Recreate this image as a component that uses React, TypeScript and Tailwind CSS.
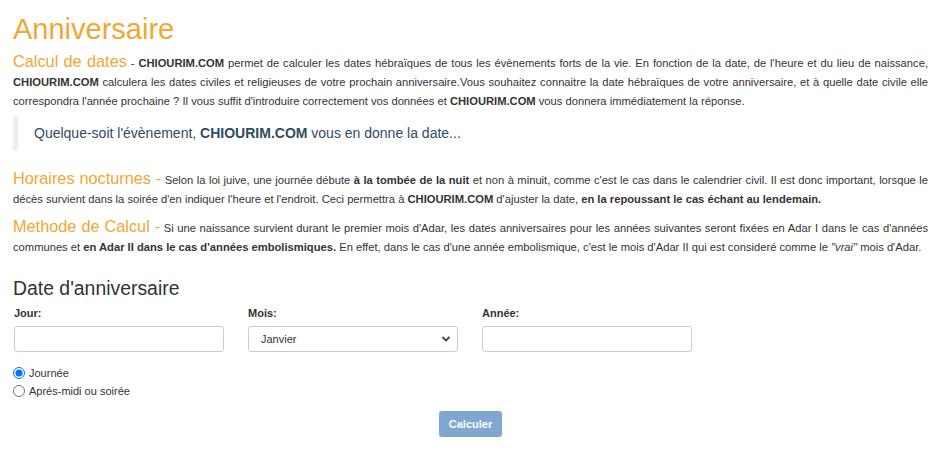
import { useState } from "react";

const Brand = () => <b>CHIOURIM.COM</b>;

export default function App() {
  const [moment, setMoment] = useState("jour");

  return (
    <div className="w-[941px] h-[450px] bg-white text-[#333] font-['Liberation_Sans',Arial,sans-serif] px-[13px] pt-[13px] overflow-hidden">
      <h1 className="text-[29px] leading-[33px] text-[#f0a733] mb-[7px]">Anniversaire</h1>

      <p className="text-[11.2px] leading-[19.2px] text-justify">
        <span className="text-[16.3px] leading-none text-[#f0a733]">Calcul de dates</span> -{" "}
        <Brand /> permet de calculer les dates hébraïques de tous les évènements forts de la vie. En
        fonction de la date, de l'heure et du lieu de naissance, <Brand /> calculera les dates
        civiles et religieuses de votre prochain anniversaire.Vous souhaitez connaitre la date
        hébraïques de votre anniversaire, et à quelle date civile elle correspondra l'année prochaine
        ? Il vous suffit d'introduire correctement vos données et <Brand /> vous donnera
        immédiatement la réponse.
      </p>

      <blockquote className="mt-[4px] mb-[20px] border-l-[5px] border-[#eee] pl-[16px] py-[7px] text-[14px] leading-[20px] text-[#2d4c68]">
        Quelque-soit l'évènement, <b>CHIOURIM.COM</b> vous en donne la date...
      </blockquote>

      <p className="text-[11.2px] leading-[19.5px] text-justify">
        <span className="text-[16.3px] leading-none text-[#f0a733]">Horaires nocturnes -</span>{" "}
        Selon la loi juive, une journée débute <b>à la tombée de la nuit</b> et non à minuit, comme
        c'est le cas dans le calendrier civil. Il est donc important, lorsque le décès survient dans
        la soirée d'en indiquer l'heure et l'endroit. Ceci permettra à <Brand /> d'ajuster la date,{" "}
        <b>en la repoussant le cas échant au lendemain.</b>
      </p>

      <p className="mt-[8px] text-[11.2px] leading-[19.5px] text-justify">
        <span className="text-[16.3px] leading-none text-[#f0a733]">Methode de Calcul -</span> Si
        une naissance survient durant le premier mois d'Adar, les dates anniversaires pour les années
        suivantes seront fixées en Adar I dans le cas d'années communes et{" "}
        <b>en Adar II dans le cas d'années embolismiques.</b> En effet, dans le cas d'une année
        embolismique, c'est le mois d'Adar II qui est consideré comme le <i>"vrai"</i> mois d'Adar.
      </p>

      <h2 className="mt-[19px] text-[19.4px] leading-[22px]">Date d'anniversaire</h2>

      <div className="mt-[7px] flex gap-[24px] pl-px">
        <div className="w-[210px]">
          <label className="block text-[11px] font-bold leading-[14px] mb-[6px]">Jour:</label>
          <input className="w-full h-[26px] border border-[#ccc] rounded-[3px] px-2 text-[11px]" />
        </div>
        <div className="w-[210px]">
          <label className="block text-[11px] font-bold leading-[14px] mb-[6px]">Mois:</label>
          <div className="relative">
            <select className="appearance-none w-full h-[26px] border border-[#ccc] rounded-[3px] pl-[12px] text-[11px] text-[#333] outline-none">
              <option>Janvier</option>
              <option>Février</option>
              <option>Mars</option>
            </select>
            <svg
              className="absolute right-[7px] top-[9px] pointer-events-none"
              width="10"
              height="8"
              viewBox="0 0 10 8"
            >
              <path d="M1.5 2l3.5 3.5L8.5 2" fill="none" stroke="#444" strokeWidth="1.8" />
            </svg>
          </div>
        </div>
        <div className="w-[210px]">
          <label className="block text-[11px] font-bold leading-[14px] mb-[6px]">Année:</label>
          <input className="w-full h-[26px] border border-[#ccc] rounded-[3px] px-2 text-[11px]" />
        </div>
      </div>

      <div className="mt-[12px] flex flex-col text-[11px] leading-[18px]">
        <label className="flex items-center gap-[4px]">
          <input
            type="radio"
            name="moment"
            className="m-0 w-[12px] h-[12px]"
            checked={moment === "jour"}
            onChange={() => setMoment("jour")}
          />
          Journée
        </label>
        <label className="flex items-center gap-[4px]">
          <input
            type="radio"
            name="moment"
            className="m-0 w-[12px] h-[12px]"
            checked={moment === "soir"}
            onChange={() => setMoment("soir")}
          />
          Aprés-midi ou soirée
        </label>
      </div>

      <div className="mt-[11px] flex justify-center">
        <button className="h-[26px] px-[10px] rounded-[3px] bg-[#7fa8d0] text-white text-[11px] font-bold">
          Calculer
        </button>
      </div>
    </div>
  );
}
